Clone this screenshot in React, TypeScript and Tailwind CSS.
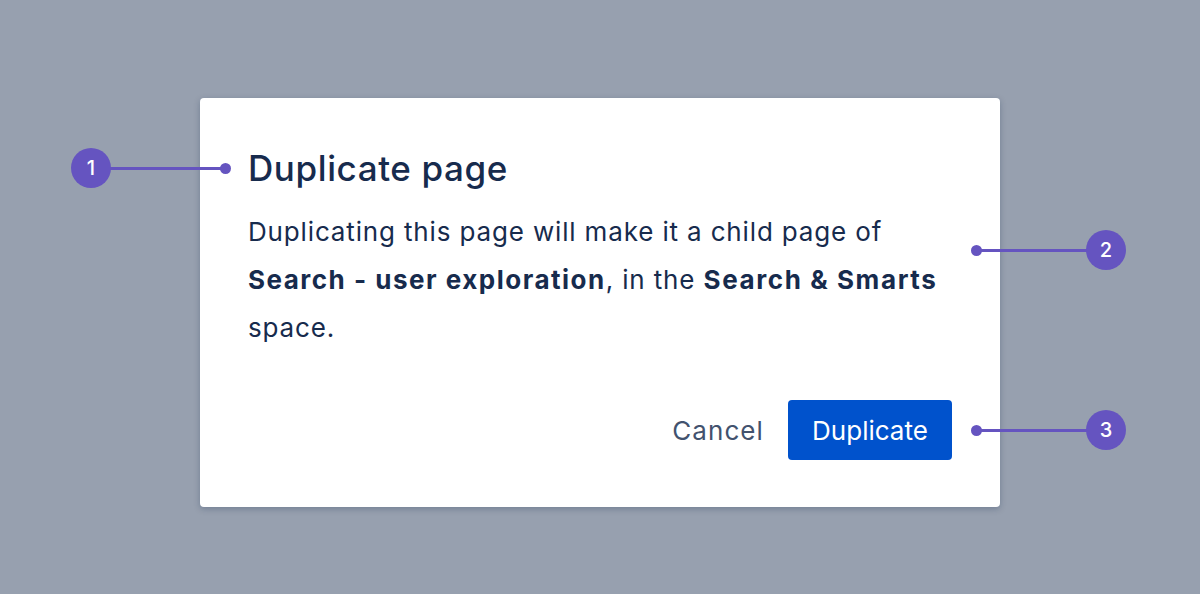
export default function App() {
  return (
    <div
      className="relative w-[1200px] h-[594px] bg-[#97a0af] overflow-hidden"
      style={{ fontFamily: "Inter, 'Noto Sans', sans-serif" }}
    >
      <div className="absolute left-[200px] top-[98px] w-[800px] h-[409px] bg-white rounded-[4px] shadow-[0_2px_6px_rgba(9,30,66,0.25)] px-12 pt-[48px] flex flex-col">
        <h1 className="text-[35px] leading-[44px] font-medium text-[#172b4d] tracking-[0.6px]">Duplicate page</h1>
        <p className="mt-[18px] text-[26px] leading-[48px] text-[#172b4d] tracking-[0.85px]">
          Duplicating this page will make it a child page of{" "}
          <span className="font-bold tracking-[1.5px]">Search - user exploration</span>, in the{" "}
          <span className="font-bold tracking-[1.6px]">Search &amp; Smarts</span> space.
        </p>
        <div className="mt-auto mb-[47px] flex items-center justify-end gap-6">
          <button className="text-[26px] text-[#42526e] tracking-[1.1px]">Cancel</button>
          <button className="h-[60px] w-[164px] rounded-[4px] bg-[#0052cc] text-white text-[26px]">Duplicate</button>
        </div>
      </div>

      <Callout n={1} cx={91} cy={168} dotX={225} />
      <Callout n={2} cx={1106} cy={250} dotX={976} />
      <Callout n={3} cx={1106} cy={430} dotX={976} />
    </div>
  );
}

function Callout({ n, cx, cy, dotX }: { n: number; cx: number; cy: number; dotX: number }) {
  const left = Math.min(cx, dotX);
  const right = Math.max(cx, dotX);
  return (
    <>
      <div
        className="absolute h-[3px] bg-[#6554c0]"
        style={{ left, width: right - left, top: cy - 1.5 }}
      />
      <div
        className="absolute w-[11px] h-[11px] rounded-full bg-[#6554c0]"
        style={{ left: dotX - 5.5, top: cy - 5.5 }}
      />
      <div
        className="absolute w-[40px] h-[40px] rounded-full bg-[#6554c0] text-white flex items-center justify-center text-[20px] font-medium"
        style={{ left: cx - 20, top: cy - 20 }}
      >
        {n}
      </div>
    </>
  );
}
